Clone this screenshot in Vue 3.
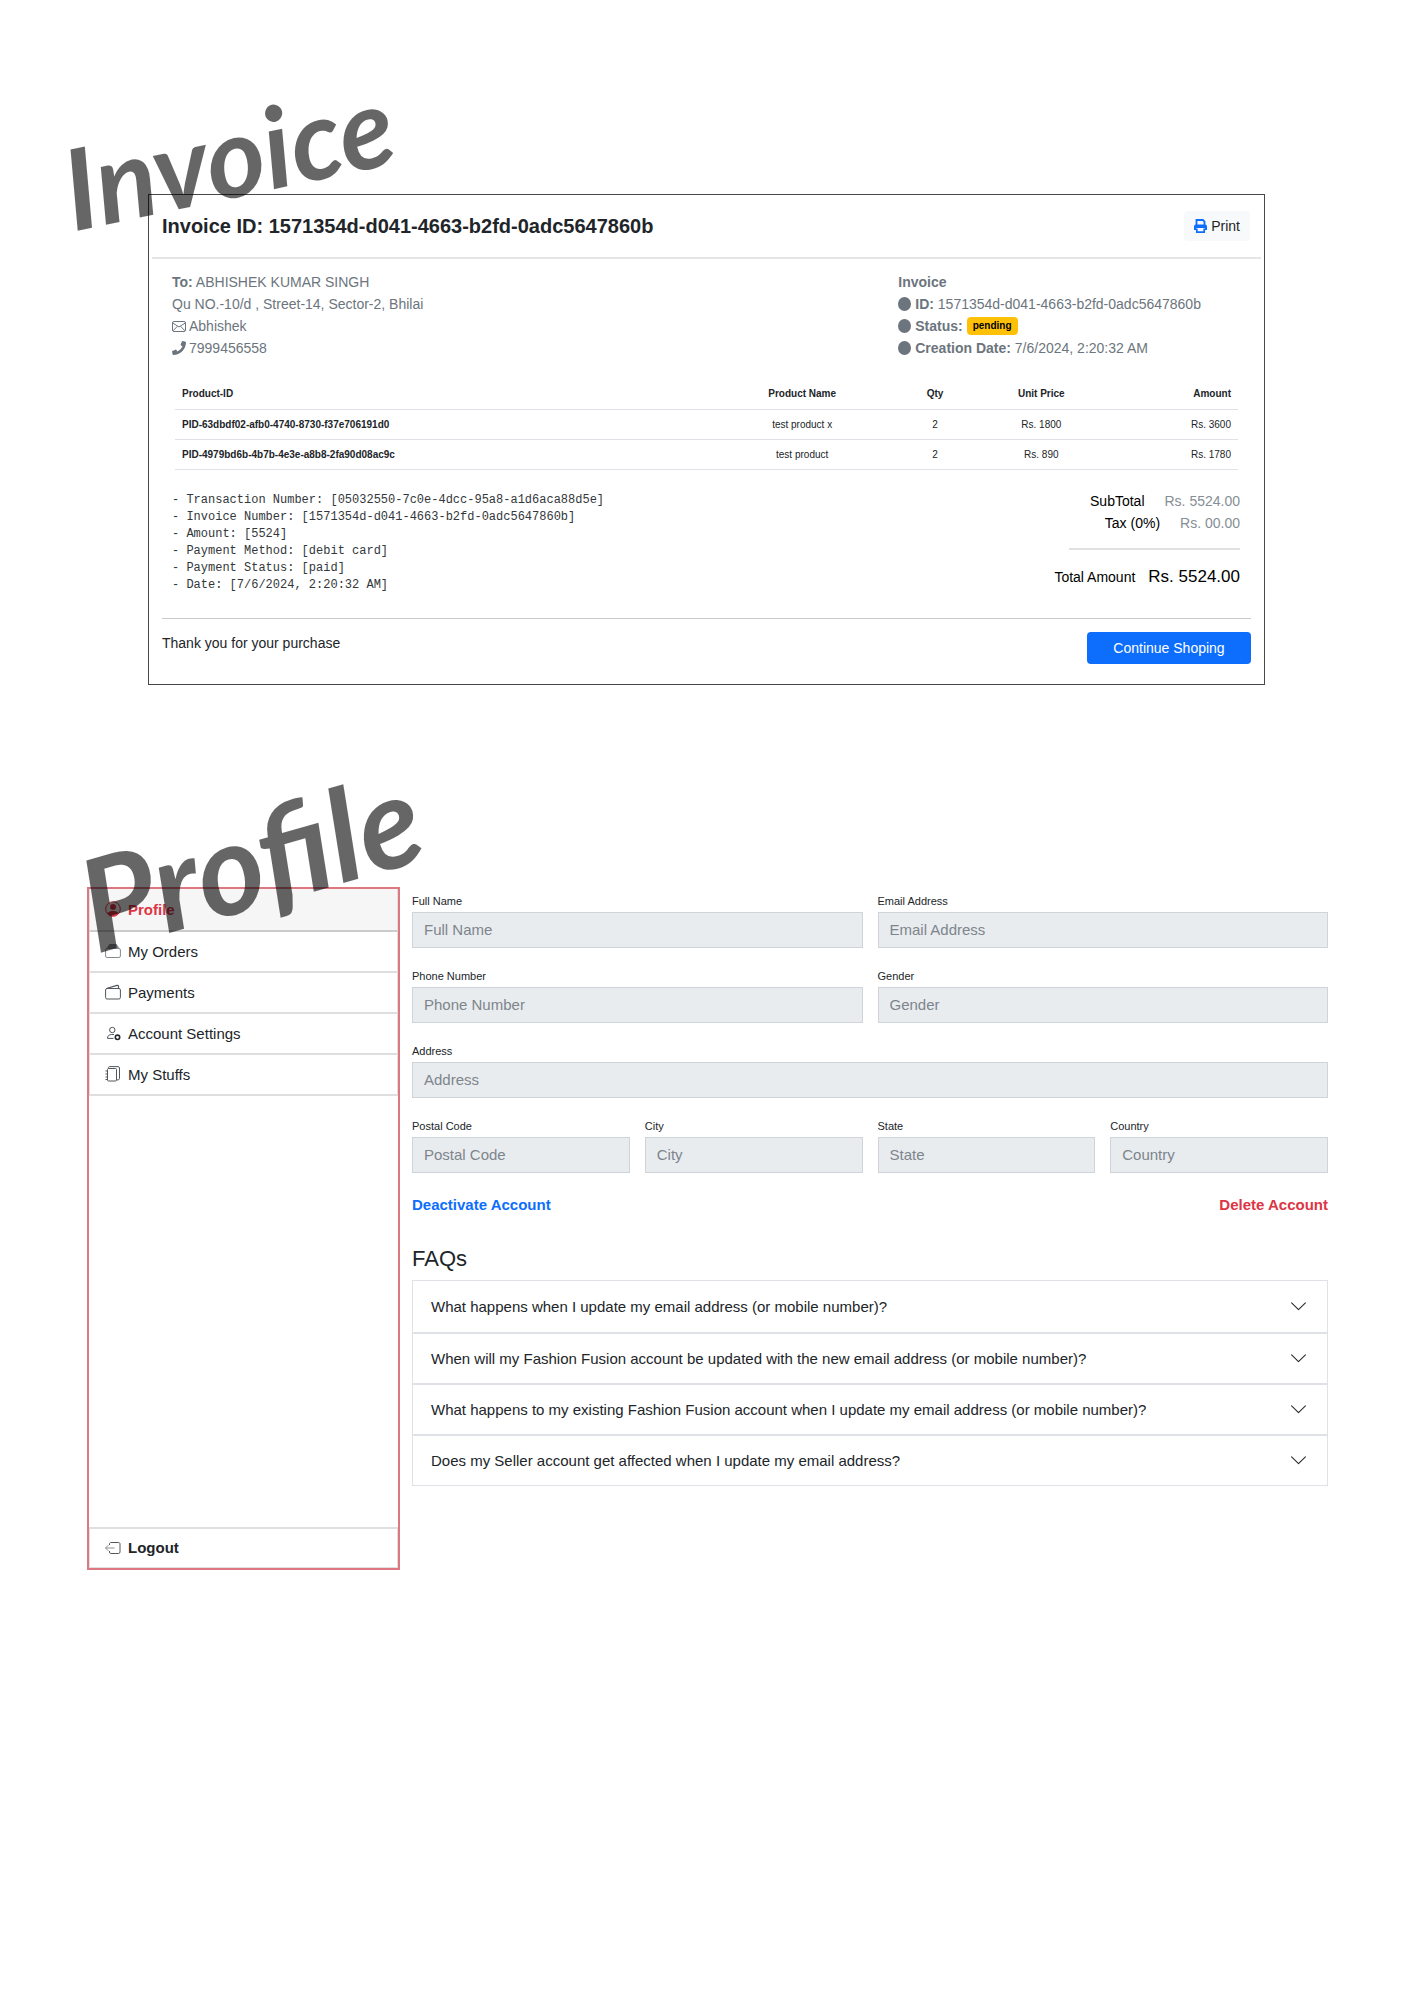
<script setup>
const invoiceId = '1571354d-d041-4663-b2fd-0adc5647860b'

const items = [
  { id: 'PID-63dbdf02-afb0-4740-8730-f37e706191d0', name: 'test product x', qty: 2, price: 'Rs. 1800', amount: 'Rs. 3600' },
  { id: 'PID-4979bd6b-4b7b-4e3e-a8b8-2fa90d08ac9c', name: 'test product', qty: 2, price: 'Rs. 890', amount: 'Rs. 1780' },
]

const receipt = [
  '- Transaction Number: [05032550-7c0e-4dcc-95a8-a1d6aca88d5e]',
  `- Invoice Number: [${invoiceId}]`,
  '- Amount: [5524]',
  '- Payment Method: [debit card]',
  '- Payment Status: [paid]',
  '- Date: [7/6/2024, 2:20:32 AM]',
].join('\n')

const fields = [
  { key: 'name', label: 'Full Name', size: 'half' },
  { key: 'email', label: 'Email Address', size: 'half' },
  { key: 'phone', label: 'Phone Number', size: 'half' },
  { key: 'gender', label: 'Gender', size: 'half' },
  { key: 'address', label: 'Address', size: 'full' },
  { key: 'postal', label: 'Postal Code', size: 'quarter' },
  { key: 'city', label: 'City', size: 'quarter' },
  { key: 'state', label: 'State', size: 'quarter' },
  { key: 'country', label: 'Country', size: 'quarter' },
]

const faqs = [
  'What happens when I update my email address (or mobile number)?',
  'When will my Fashion Fusion account be updated with the new email address (or mobile number)?',
  'What happens to my existing Fashion Fusion account when I update my email address (or mobile number)?',
  'Does my Seller account get affected when I update my email address?',
]
</script>

<template>
  <main class="page">
    <section class="invoice">
      <h1 class="script script-invoice">Invoice</h1>
      <div class="card">
        <header class="card-head">
          <h2>Invoice ID: {{ invoiceId }}</h2>
          <button type="button" class="print">
            <svg width="13" height="14" viewBox="0 0 13 14" aria-hidden="true">
              <path d="M2.500 6V1h6.500l1.500 1.500V6" fill="none" stroke="currentColor" stroke-width="1.800" />
              <path d="M2 5.500h9a2 2 0 0 1 2 2V11h-2V9H2v2H0V7.500a2 2 0 0 1 2-2z" fill="currentColor" />
              <path d="M2.800 9.500v3.600h7.400V9.500" fill="none" stroke="currentColor" stroke-width="1.700" />
            </svg>
            Print
          </button>
        </header>

        <div class="card-body">
          <div class="parties">
            <ul class="lines">
              <li><b>To:</b> ABHISHEK KUMAR SINGH</li>
              <li>Qu NO.-10/d , Street-14, Sector-2, Bhilai</li>
              <li class="with-icon">
                <svg width="14" height="11" viewBox="0 0 14 11" fill="none" stroke="currentColor" aria-hidden="true">
                  <rect x=".5" y=".5" width="13" height="10" rx="1.500" />
                  <path d="M.8 2 7 6l6.200-4M1 9.800l4.500-4.600M13 9.800 8.500 5.200" />
                </svg>
                Abhishek
              </li>
              <li class="with-icon">
                <svg width="14" height="14" viewBox="0 0 16 16" fill="currentColor" aria-hidden="true">
                  <path d="M15.500.8 12.300 0c-.4-.1-.7.100-.9.400L9.900 3.900c-.1.300 0 .7.200.9L12 6.300A11.500 11.500 0 0 1 6.300 12L4.800 10.100c-.2-.3-.6-.3-.9-.2L.4 11.400c-.3.200-.5.500-.4.900l.8 3.200c.1.300.4.500.7.500C9.600 16 16 9.500 16 1.500c0-.3-.2-.6-.5-.7z" />
                </svg>
                7999456558
              </li>
            </ul>
            <ul class="lines meta">
              <li><b>Invoice</b></li>
              <li class="with-icon"><i class="dot"></i><span><b>ID:</b> {{ invoiceId }}</span></li>
              <li class="with-icon"><i class="dot"></i><b>Status:</b> <span class="badge">pending</span></li>
              <li class="with-icon"><i class="dot"></i><span><b>Creation Date:</b> 7/6/2024, 2:20:32 AM</span></li>
            </ul>
          </div>

          <table class="items">
            <thead>
              <tr>
                <th scope="col" class="col-id">Product-ID</th>
                <th scope="col" class="col-name">Product Name</th>
                <th scope="col" class="col-qty">Qty</th>
                <th scope="col" class="col-price">Unit Price</th>
                <th scope="col" class="col-amount">Amount</th>
              </tr>
            </thead>
            <tbody>
              <tr v-for="item in items" :key="item.id">
                <th scope="row" class="col-id">{{ item.id }}</th>
                <td>{{ item.name }}</td>
                <td>{{ item.qty }}</td>
                <td>{{ item.price }}</td>
                <td class="col-amount">{{ item.amount }}</td>
              </tr>
            </tbody>
          </table>

          <div class="summary">
            <pre>{{ receipt }}</pre>
            <div class="totals">
              <p><span>SubTotal</span><span class="value">Rs. 5524.00</span></p>
              <p><span>Tax (0%)</span><span class="value">Rs. 00.00</span></p>
              <p class="grand"><span>Total Amount</span><strong>Rs. 5524.00</strong></p>
            </div>
          </div>
        </div>

        <footer class="card-foot">
          <p>Thank you for your purchase</p>
          <button type="button" class="continue">Continue Shoping</button>
        </footer>
      </div>
    </section>

    <section class="profile">
      <h1 class="script script-profile">Profile</h1>
      <nav class="side">
        <a href="#profile" class="active">
          <svg width="16" height="16" viewBox="0 0 16 16" aria-hidden="true">
            <circle cx="8" cy="8" r="7.300" fill="none" stroke="currentColor" />
            <circle cx="8" cy="6" r="3" fill="currentColor" />
            <path d="M2.200 12.200C3.500 10.500 5.500 10 8 10s4.500.5 5.800 2.200A7 7 0 0 1 8 15.300a7 7 0 0 1-5.800-3.100z" fill="currentColor" />
          </svg>
          Profile
        </a>
        <a href="#orders">
          <svg width="16" height="16" viewBox="0 0 16 16" aria-hidden="true">
            <path d="M4.500 1h7l3 4.200h-13z" fill="#8d9195" />
            <rect x=".6" y="5.500" width="14.800" height="9" rx="1.500" fill="none" stroke="#848a90" />
          </svg>
          My Orders
        </a>
        <a href="#payments">
          <svg width="16" height="16" viewBox="0 0 16 16" fill="none" stroke="#51575c" aria-hidden="true">
            <rect x=".6" y="4.500" width="14.800" height="10.500" rx="1.500" />
            <path d="M1.500 4.500 12 1.400c.8-.2 1.500.2 1.500 1V4.500M1.500 4.500h12" stroke-width="1.200" />
          </svg>
          Payments
        </a>
        <a href="#settings">
          <svg width="16" height="16" viewBox="0 0 16 16" fill="none" stroke="#51575c" aria-hidden="true">
            <circle cx="7.300" cy="5" r="2.700" />
            <path d="M9 9.500H6.500C4 9.500 2.500 11 2.500 13.400h6" />
            <circle cx="12.500" cy="12.300" r="2.200" stroke="#25292d" stroke-width="1.600" />
          </svg>
          Account Settings
        </a>
        <a href="#stuffs">
          <svg width="16" height="16" viewBox="0 0 16 16" fill="none" stroke="#51575c" aria-hidden="true">
            <rect x="2.500" y="2.500" width="9" height="12.500" rx="1" />
            <path d="M3.500 2.500V1.600c0-.6.400-1 1-1h8.500c.8 0 1.500.6 1.500 1.400v10.500c0 .8-.5 1.200-1.200 1.300L11.500 14M.5 5h2M.5 8h2M.5 11h2M.5 13.500h2" />
          </svg>
          My Stuffs
        </a>
        <a href="#logout" class="logout">
          <svg width="16" height="16" viewBox="0 0 16 16" fill="none" stroke="#51575c" aria-hidden="true">
            <path d="M4.500 5V4c0-.8.500-1.500 1.300-1.500h7.900c.8 0 1.300.7 1.300 1.500v8c0 .8-.5 1.500-1.300 1.500H5.800c-.8 0-1.300-.7-1.300-1.500v-1" />
            <path d="M9.500 8h-9M3.500 5l-3 3 3 3" stroke="#8d9195" />
          </svg>
          Logout
        </a>
      </nav>

      <div class="content">
        <form class="form" @submit.prevent>
          <div v-for="field in fields" :key="field.key" class="field" :class="field.size">
            <label :for="field.key">{{ field.label }}</label>
            <input :id="field.key" type="text" :placeholder="field.label" disabled />
          </div>
        </form>

        <div class="account-links">
          <a href="#deactivate">Deactivate Account</a>
          <a href="#delete" class="danger">Delete Account</a>
        </div>

        <h2 class="faq-title">FAQs</h2>
        <div class="faqs">
          <button v-for="question in faqs" :key="question" type="button" aria-expanded="false">
            <span>{{ question }}</span>
            <svg width="17" height="17" viewBox="0 0 16 16" fill="none" stroke="#25292d" stroke-linecap="round" stroke-linejoin="round" aria-hidden="true">
              <path d="m1.500 4.500 6.500 6.500 6.500-6.500" />
            </svg>
          </button>
        </div>
      </div>
    </section>
  </main>
</template>

<style>
body {
  margin: 0;
  background: #fff;
}
</style>

<style scoped>
* {
  box-sizing: border-box;
}

h1,
h2,
p,
ul,
pre {
  margin: 0;
  padding: 0;
}

button,
input {
  font: inherit;
}

.page {
  padding: 194px 86px 430px 87px;
  font-family: "Liberation Sans", Arial, sans-serif;
  font-size: 15px;
  color: #212529;
}

/* Hand-lettered section names laid over the panels */
.script {
  position: absolute;
  z-index: 1;
  font-family: "Brush Script MT", Lato, cursive;
  font-style: italic;
  font-weight: 700;
  line-height: 1;
  color: rgba(0, 0, 0, 0.6);
  pointer-events: none;
}

.script-invoice {
  left: -87px;
  top: -95px;
  font-size: 112px;
  transform: rotate(-12deg);
}

.script-profile {
  left: -11px;
  top: -92px;
  font-size: 128px;
  transform: rotate(-16deg);
}

.invoice {
  position: relative;
  margin: 0 63px 0 61px;
  font-size: 14px;
}

.card {
  border: 1px solid #45484c;
}

.card-head {
  display: flex;
  align-items: center;
  justify-content: space-between;
  height: 64px;
  margin: 0 3px;
  padding: 0 11px 0 10px;
  border-bottom: 2px solid #e3e5e7;
}

.card-head h2 {
  font-size: 20px;
  line-height: 24px;
}

.print {
  display: flex;
  align-items: center;
  gap: 4px;
  height: 30px;
  padding: 0 10px;
  border: 0;
  border-radius: 4px;
  background: #f8f9fa;
  color: #212529;
}

.print svg {
  color: #0d6efd;
}

.card-body {
  padding: 12px 24px 24px 23px;
}

.parties {
  display: flex;
  color: #6c757d;
}

.lines {
  flex: 1;
  list-style: none;
  line-height: 22px;
}

.lines.meta {
  flex: 0 0 32%;
}

.with-icon {
  display: flex;
  align-items: center;
  gap: 3px;
}

.dot {
  width: 13px;
  height: 14px;
  border-radius: 50%;
  background: #6c757d;
}

.meta .with-icon {
  gap: 4px;
}

.badge {
  padding: 0 6px;
  border-radius: 4px;
  background: #ffc107;
  color: #000;
  font-size: 10px;
  font-weight: 700;
  line-height: 18px;
}

.items {
  width: calc(100% - 5px);
  margin: 20px 3px;
  border-collapse: collapse;
  table-layout: fixed;
  font-size: 10px;
  text-align: center;
}

.items th,
.items td {
  height: 30px;
  padding: 0 7px;
  border-bottom: 1px solid #dee2e6;
}

.items .col-id {
  width: 51%;
  text-align: left;
}

.items .col-name {
  width: 16%;
}

.items .col-qty {
  width: 9%;
}

.items .col-price {
  width: 11%;
}

.items .col-amount {
  text-align: right;
}

.summary {
  display: flex;
  justify-content: space-between;
}

.summary pre {
  padding-top: 2px;
  font-family: "Liberation Mono", monospace;
  font-size: 12px;
  line-height: 17px;
  color: #33373b;
}

.totals {
  color: #000;
  line-height: 22px;
}

.totals p {
  display: flex;
  align-items: baseline;
  justify-content: flex-end;
  gap: 20px;
}

.totals .value {
  color: #868e96;
}

.totals .grand {
  gap: 13px;
  padding-top: 32px;
  background: linear-gradient(#e0e0e0, #e0e0e0) right 14px / 171px 2px no-repeat;
}

.totals strong {
  font-size: 17px;
  font-weight: 400;
}

.card-foot {
  display: flex;
  align-items: flex-start;
  justify-content: space-between;
  margin: 0 13px;
  padding: 13px 0 20px;
  border-top: 1px solid #c8cacc;
}

.card-foot p {
  line-height: 22px;
}

.continue {
  width: 164px;
  height: 32px;
  border: 0;
  border-radius: 4px;
  background: #0d6efd;
  color: #fff;
}

.profile {
  position: relative;
  display: flex;
  gap: 12px;
  margin-top: 202px;
}

.side {
  display: flex;
  flex: 0 0 313px;
  flex-direction: column;
  min-height: 683px;
  border: 2px solid #dd7782;
}

.side a {
  display: flex;
  align-items: center;
  gap: 7px;
  height: 41px;
  padding: 0 15px;
  border: solid #dfdfdf;
  border-width: 0 1px 2px;
  color: #212529;
  text-decoration: none;
  flex-shrink: 0;
}

.side .active {
  height: 43px;
  border-bottom-color: #ccc;
  background: #f6f6f6;
  color: #dc3545;
  font-weight: 700;
}

.side .logout {
  margin-top: auto;
  border-width: 2px 1px 1px;
  font-weight: 700;
}

.content {
  flex: 1;
  padding-top: 6px;
}

.form {
  display: grid;
  grid-template-columns: repeat(4, 1fr);
  gap: 20px 15px;
}

.field {
  display: flex;
  flex-direction: column;
  gap: 3px;
  min-width: 0;
}

.half {
  grid-column: span 2;
}

.full {
  grid-column: span 4;
}

.field label {
  font-size: 11px;
  line-height: 16px;
}

.field input {
  width: 100%;
  height: 36px;
  padding: 0 11px;
  border: 1px solid #ced4da;
  border-radius: 0;
  background: #e9ecef;
}

.field input::placeholder {
  color: #7d858c;
  opacity: 1;
}

.account-links {
  display: flex;
  justify-content: space-between;
  margin-top: 22px;
  line-height: 20px;
}

.account-links a {
  color: #0d6efd;
  font-weight: 700;
  text-decoration: none;
}

.account-links .danger {
  color: #dc3545;
}

.faq-title {
  margin: 31px 0 8px;
  font-size: 22px;
  font-weight: 400;
  line-height: 26px;
}

.faqs {
  border: 1px solid #dee2e6;
}

.faqs button {
  display: flex;
  align-items: center;
  justify-content: space-between;
  width: 100%;
  height: 51px;
  padding: 0 20px 0 18px;
  border: 0;
  background: #fff;
  color: #212529;
  text-align: left;
}

.faqs button + button {
  border-top: 2px solid #dee2e6;
}
</style>
